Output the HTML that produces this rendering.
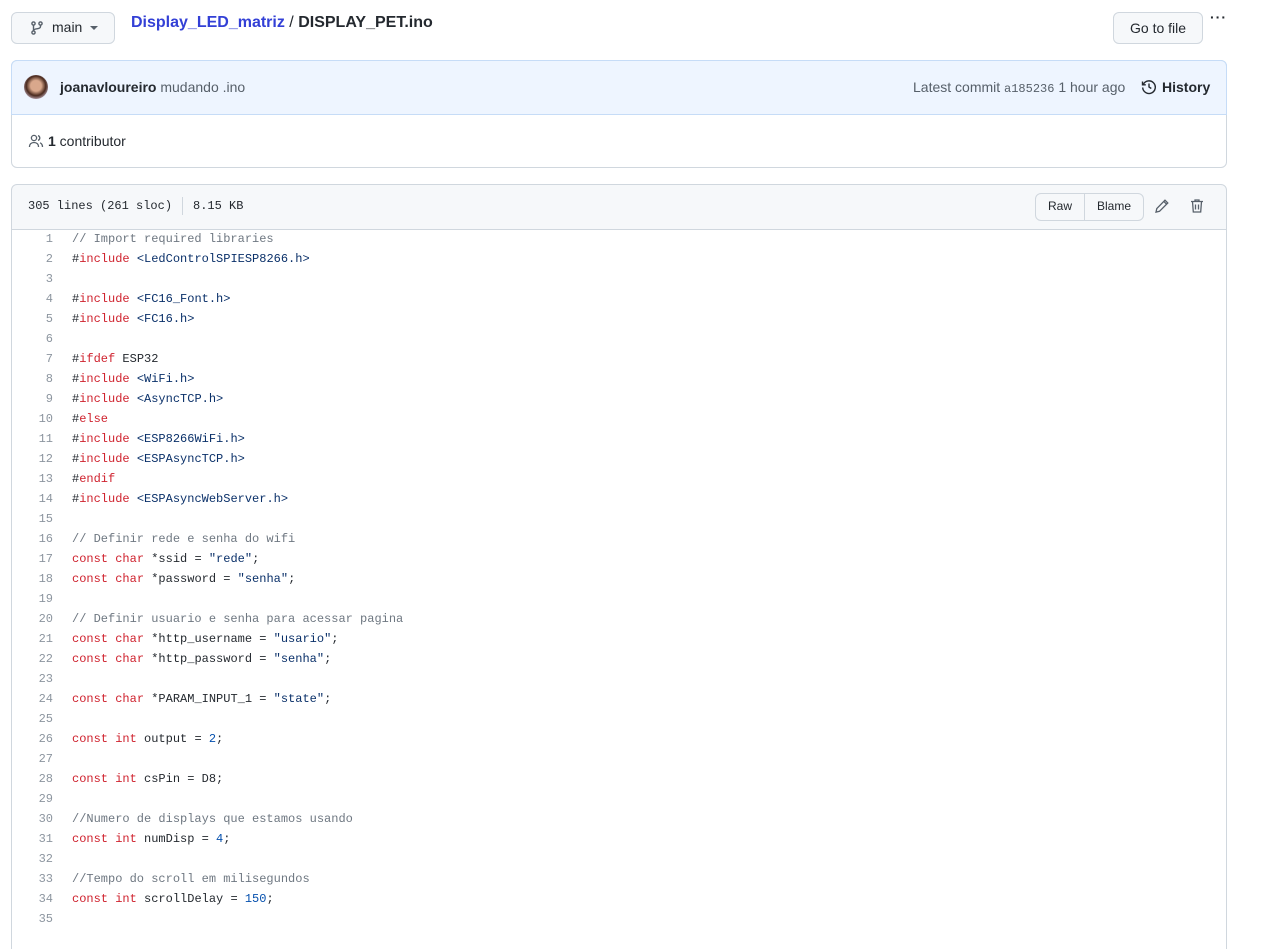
<!DOCTYPE html>
<html><head><meta charset="utf-8"><style>
*{box-sizing:border-box;margin:0;padding:0}
body{width:1267px;height:927px;overflow:hidden;background:#fff;font-family:"Liberation Sans",sans-serif;color:#24292f;font-size:14px;position:relative}
.abs{position:absolute}
.btn{border:1px solid #d0d7de;background:#f6f8fa;border-radius:6px}
.mono{font-family:"Liberation Mono",monospace}
.code{position:absolute;left:11px;top:229px;width:1216px;border-left:1px solid #d0d7de;border-right:1px solid #d0d7de;height:720px}
.ln{position:absolute;left:0;width:41px;text-align:right;color:#8c959f}
.tx{position:absolute;left:60px;white-space:pre}
.row{position:absolute;left:0;height:20px;line-height:20px;font-size:12px;font-family:"Liberation Mono",monospace;width:100%}
.k{color:#cf222e}.s{color:#0a3069}.c{color:#6e7781}.n{color:#0550ae}
</style></head><body>
<div class="abs btn" style="left:11px;top:12px;width:104px;height:32px"></div>
<svg class="abs" style="left:29px;top:20px" width="16" height="16" viewBox="0 0 16 16" fill="none" stroke="#57606a" stroke-width="1.4"><circle cx="4.5" cy="3.5" r="1.6"/><circle cx="11.5" cy="3.5" r="1.6"/><circle cx="4.5" cy="12.5" r="1.6"/><path d="M4.5 5.1v5.8M11.5 5.1v1.4c0 1.5-1.5 2-3 2.2s-4 .6-4 2"/></svg>
<div class="abs" style="left:52px;top:19px;font-size:14px">main</div>
<svg class="abs" style="left:89px;top:25px" width="10" height="6"><path d="M1 1l4 4 4-4z" fill="#57606a"/></svg>
<div class="abs" style="left:131px;top:14px;font-size:16px;font-weight:bold"><span style="color:#3340d6">Display_LED_matriz</span> <span style="font-weight:normal">/</span> DISPLAY_PET.ino</div>
<div class="abs btn" style="left:1113px;top:12px;width:90px;height:32px"></div>
<div class="abs" style="left:1130px;top:20px">Go to file</div>
<div class="abs" style="left:1210px;top:9px;font-size:14px;font-weight:bold;letter-spacing:1px">···</div>

<div class="abs" style="left:11px;top:60px;width:1216px;height:108px;border:1px solid #d0d7de;border-radius:6px"></div>
<div class="abs" style="left:11px;top:60px;width:1216px;height:55px;background:#eef5ff;border:1px solid #c6dcf7;border-radius:6px 6px 0 0"></div>
<div class="abs" style="left:24px;top:75px;width:24px;height:24px;border-radius:50%;background:radial-gradient(circle at 50% 45%,#d9a88c 30%,#4a2a1e 55%,#c8b6c6 80%)"></div>
<div class="abs" style="left:60px;top:79px"><b>joanavloureiro</b> <span style="color:#57606a">mudando .ino</span></div>
<div class="abs" style="left:913px;top:79px;color:#57606a">Latest commit <span class="mono" style="font-size:12px">a185236</span> 1 hour ago</div>
<svg class="abs" style="left:1141px;top:79px" width="16" height="16" viewBox="0 0 16 16" fill="none" stroke="#24292f" stroke-width="1.4"><path d="M2.3 5.5A6.3 6.3 0 1 1 1.7 8.5"/><path d="M1.5 2.5v3.3h3.3"/><path d="M8 4.5V8l2.3 1.5"/></svg>
<div class="abs" style="left:1162px;top:79px;font-weight:bold">History</div>
<svg class="abs" style="left:28px;top:133px" width="16" height="16" viewBox="0 0 16 16" fill="none" stroke="#57606a" stroke-width="1.3"><circle cx="6" cy="5" r="2.6"/><path d="M1.5 14c0-3 2-4.5 4.5-4.5s4.5 1.5 4.5 4.5"/><path d="M10 2.6a2.5 2.5 0 0 1 0 4.8M12 9.8c1.5.6 2.5 2 2.5 4.2"/></svg>
<div class="abs" style="left:48px;top:133px"><b>1</b> contributor</div>

<div class="abs" style="left:11px;top:184px;width:1216px;height:46px;background:#f6f8fa;border:1px solid #d0d7de;border-radius:6px 6px 0 0"></div>
<div class="abs mono" style="left:28px;top:199px;font-size:12px">305 lines (261 sloc)</div>
<div class="abs" style="left:182px;top:197px;width:1px;height:18px;background:#d0d7de"></div>
<div class="abs mono" style="left:193px;top:199px;font-size:12px">8.15 KB</div>
<div class="abs btn" style="left:1035px;top:193px;width:109px;height:28px;background:#f6f8fa"></div>
<div class="abs" style="left:1084px;top:194px;width:1px;height:26px;background:#d0d7de"></div>
<div class="abs" style="left:1048px;top:199px;font-size:12px">Raw</div>
<div class="abs" style="left:1097px;top:199px;font-size:12px">Blame</div>
<svg class="abs" style="left:1154px;top:198px" width="16" height="16" viewBox="0 0 16 16" fill="none" stroke="#57606a" stroke-width="1.3"><path d="M11 2.2l2.8 2.8-8.3 8.3-3.5.8.8-3.5z M9.8 3.4l2.8 2.8"/></svg>
<svg class="abs" style="left:1189px;top:198px" width="16" height="16" viewBox="0 0 16 16" fill="none" stroke="#57606a" stroke-width="1.3"><path d="M2 3.5h12M6 3.5V2h4v1.5M3.5 3.5l.8 10.5h7.4l.8-10.5M6.5 6.5v5M9.5 6.5v5"/></svg>

<div class="code">
<div class="row" style="top:0"><span class="ln">1</span><span class="tx c">// Import required libraries</span></div>
<div class="row" style="top:20px"><span class="ln">2</span><span class="tx">#<span class="k">include</span> <span class="s">&lt;LedControlSPIESP8266.h&gt;</span></span></div>
<div class="row" style="top:40px"><span class="ln">3</span></div>
<div class="row" style="top:60px"><span class="ln">4</span><span class="tx">#<span class="k">include</span> <span class="s">&lt;FC16_Font.h&gt;</span></span></div>
<div class="row" style="top:80px"><span class="ln">5</span><span class="tx">#<span class="k">include</span> <span class="s">&lt;FC16.h&gt;</span></span></div>
<div class="row" style="top:100px"><span class="ln">6</span></div>
<div class="row" style="top:120px"><span class="ln">7</span><span class="tx">#<span class="k">ifdef</span> ESP32</span></div>
<div class="row" style="top:140px"><span class="ln">8</span><span class="tx">#<span class="k">include</span> <span class="s">&lt;WiFi.h&gt;</span></span></div>
<div class="row" style="top:160px"><span class="ln">9</span><span class="tx">#<span class="k">include</span> <span class="s">&lt;AsyncTCP.h&gt;</span></span></div>
<div class="row" style="top:180px"><span class="ln">10</span><span class="tx">#<span class="k">else</span></span></div>
<div class="row" style="top:200px"><span class="ln">11</span><span class="tx">#<span class="k">include</span> <span class="s">&lt;ESP8266WiFi.h&gt;</span></span></div>
<div class="row" style="top:220px"><span class="ln">12</span><span class="tx">#<span class="k">include</span> <span class="s">&lt;ESPAsyncTCP.h&gt;</span></span></div>
<div class="row" style="top:240px"><span class="ln">13</span><span class="tx">#<span class="k">endif</span></span></div>
<div class="row" style="top:260px"><span class="ln">14</span><span class="tx">#<span class="k">include</span> <span class="s">&lt;ESPAsyncWebServer.h&gt;</span></span></div>
<div class="row" style="top:280px"><span class="ln">15</span></div>
<div class="row" style="top:300px"><span class="ln">16</span><span class="tx c">// Definir rede e senha do wifi</span></div>
<div class="row" style="top:320px"><span class="ln">17</span><span class="tx"><span class="k">const</span> <span class="k">char</span> *ssid = <span class="s">"rede"</span>;</span></div>
<div class="row" style="top:340px"><span class="ln">18</span><span class="tx"><span class="k">const</span> <span class="k">char</span> *password = <span class="s">"senha"</span>;</span></div>
<div class="row" style="top:360px"><span class="ln">19</span></div>
<div class="row" style="top:380px"><span class="ln">20</span><span class="tx c">// Definir usuario e senha para acessar pagina</span></div>
<div class="row" style="top:400px"><span class="ln">21</span><span class="tx"><span class="k">const</span> <span class="k">char</span> *http_username = <span class="s">"usario"</span>;</span></div>
<div class="row" style="top:420px"><span class="ln">22</span><span class="tx"><span class="k">const</span> <span class="k">char</span> *http_password = <span class="s">"senha"</span>;</span></div>
<div class="row" style="top:440px"><span class="ln">23</span></div>
<div class="row" style="top:460px"><span class="ln">24</span><span class="tx"><span class="k">const</span> <span class="k">char</span> *PARAM_INPUT_1 = <span class="s">"state"</span>;</span></div>
<div class="row" style="top:480px"><span class="ln">25</span></div>
<div class="row" style="top:500px"><span class="ln">26</span><span class="tx"><span class="k">const</span> <span class="k">int</span> output = <span class="n">2</span>;</span></div>
<div class="row" style="top:520px"><span class="ln">27</span></div>
<div class="row" style="top:540px"><span class="ln">28</span><span class="tx"><span class="k">const</span> <span class="k">int</span> csPin = D8;</span></div>
<div class="row" style="top:560px"><span class="ln">29</span></div>
<div class="row" style="top:580px"><span class="ln">30</span><span class="tx c">//Numero de displays que estamos usando</span></div>
<div class="row" style="top:600px"><span class="ln">31</span><span class="tx"><span class="k">const</span> <span class="k">int</span> numDisp = <span class="n">4</span>;</span></div>
<div class="row" style="top:620px"><span class="ln">32</span></div>
<div class="row" style="top:640px"><span class="ln">33</span><span class="tx c">//Tempo do scroll em milisegundos</span></div>
<div class="row" style="top:660px"><span class="ln">34</span><span class="tx"><span class="k">const</span> <span class="k">int</span> scrollDelay = <span class="n">150</span>;</span></div>
<div class="row" style="top:680px"><span class="ln">35</span></div>
</div>
</body></html>
